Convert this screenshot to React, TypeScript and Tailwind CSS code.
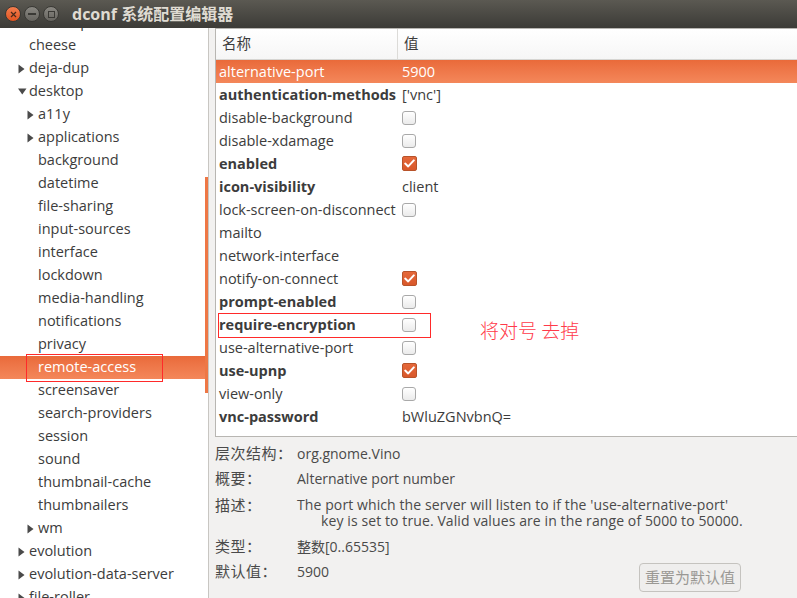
import React from "react";

const FONT = '"Open Sans", "Noto Sans CJK SC", sans-serif';

type TreeItem = { label: string; level: number; arrow?: "right" | "down"; selected?: boolean };

const tree: TreeItem[] = [
  { label: "charmap", level: 1 },
  { label: "cheese", level: 1 },
  { label: "deja-dup", level: 1, arrow: "right" },
  { label: "desktop", level: 1, arrow: "down" },
  { label: "a11y", level: 2, arrow: "right" },
  { label: "applications", level: 2, arrow: "right" },
  { label: "background", level: 2 },
  { label: "datetime", level: 2 },
  { label: "file-sharing", level: 2 },
  { label: "input-sources", level: 2 },
  { label: "interface", level: 2 },
  { label: "lockdown", level: 2 },
  { label: "media-handling", level: 2 },
  { label: "notifications", level: 2 },
  { label: "privacy", level: 2 },
  { label: "remote-access", level: 2, selected: true },
  { label: "screensaver", level: 2 },
  { label: "search-providers", level: 2 },
  { label: "session", level: 2 },
  { label: "sound", level: 2 },
  { label: "thumbnail-cache", level: 2 },
  { label: "thumbnailers", level: 2 },
  { label: "wm", level: 2, arrow: "right" },
  { label: "evolution", level: 1, arrow: "right" },
  { label: "evolution-data-server", level: 1, arrow: "right" },
  { label: "file-roller", level: 1, arrow: "right" },
];

type Row = { name: string; bold?: boolean; value?: string; check?: boolean; selected?: boolean };

const rows: Row[] = [
  { name: "alternative-port", value: "5900", selected: true },
  { name: "authentication-methods", bold: true, value: "['vnc']" },
  { name: "disable-background", check: false },
  { name: "disable-xdamage", check: false },
  { name: "enabled", bold: true, check: true },
  { name: "icon-visibility", bold: true, value: "client" },
  { name: "lock-screen-on-disconnect", check: false },
  { name: "mailto" },
  { name: "network-interface" },
  { name: "notify-on-connect", check: true },
  { name: "prompt-enabled", bold: true, check: false },
  { name: "require-encryption", bold: true, check: false },
  { name: "use-alternative-port", check: false },
  { name: "use-upnp", bold: true, check: true },
  { name: "view-only", check: false },
  { name: "vnc-password", bold: true, value: "bWluZGNvbnQ=" },
];

function Arrow({ dir }: { dir: "right" | "down" }) {
  if (dir === "down") {
    return (
      <svg width="9" height="7" viewBox="0 0 9 7">
        <polygon points="0,0.5 8.5,0.5 4.25,6.5" fill="#4a4a4a" />
      </svg>
    );
  }
  return (
    <svg width="7" height="10" viewBox="0 0 7 10">
      <polygon points="0.5,0.5 6.5,5 0.5,9.5" fill="#4a4a4a" />
    </svg>
  );
}

function Check({ on }: { on: boolean }) {
  if (on) {
    return (
      <div className="w-[15px] h-[15px] rounded-[2px] border border-[#b8532a] bg-gradient-to-b from-[#e4683a] to-[#d9582a] flex items-center justify-center">
        <svg width="11" height="9" viewBox="0 0 11 9">
          <path d="M1.2 4.6 L4.2 7.4 L9.8 1.4" stroke="#ffffff" strokeWidth="2" fill="none" strokeLinecap="round" strokeLinejoin="round" />
        </svg>
      </div>
    );
  }
  return <div className="w-[14px] h-[14px] rounded-[3px] border border-[#a9a9a9] bg-gradient-to-b from-white to-[#ebebeb]" />;
}

function Label({ children }: { children: React.ReactNode }) {
  return <div className="w-[82px] shrink-0 text-[15px] tracking-[0.5px]">{children}</div>;
}

export default function App() {
  return (
    <div className="w-[797px] h-[598px] overflow-hidden flex flex-col bg-[#f2f1f0] relative" style={{ fontFamily: FONT }}>
      {/* Title bar */}
      <div className="h-[28px] shrink-0 flex items-center bg-gradient-to-b from-[#5b5952] to-[#3c3b37]">
        <div className="flex items-center gap-[3px] pl-[5px]">
          <div className="w-[16px] h-[16px] rounded-full bg-gradient-to-b from-[#f37d4d] to-[#e2541f] border border-[#3a3935] flex items-center justify-center">
            <svg width="7" height="7" viewBox="0 0 7 7">
              <path d="M1 1 L6 6 M6 1 L1 6" stroke="#4a2a1a" strokeWidth="1.2" />
            </svg>
          </div>
          <div className="w-[16px] h-[16px] rounded-full bg-gradient-to-b from-[#8a8882] to-[#66645f] border border-[#3a3935] flex items-center justify-center">
            <div className="w-[8px] h-[1.5px] bg-[#3a3935]" />
          </div>
          <div className="w-[16px] h-[16px] rounded-full bg-gradient-to-b from-[#8a8882] to-[#66645f] border border-[#3a3935] flex items-center justify-center">
            <div className="w-[7px] h-[7px] border border-[#3a3935]" />
          </div>
        </div>
        <div className="ml-[13px] text-[16px] font-bold text-[#dfdbd2] leading-none">dconf 系统配置编辑器</div>
      </div>

      <div className="flex flex-1 min-h-0">
        {/* Left tree */}
        <div className="w-[209px] shrink-0 bg-white border-r border-[#c8c6c2] relative overflow-hidden">
          <div className="mt-[-17px] text-[14.5px] text-[#3c3c3c]">
            {tree.map((t, i) => (
              <div
                key={i}
                className={
                  "h-[23px] flex items-center " +
                  (t.selected ? "bg-gradient-to-b from-[#e96a3a] to-[#f4875a] text-white" : "")
                }
                style={{ paddingLeft: t.level === 1 ? 18 : 27 }}
              >
                <div className="w-[11px] flex items-center">{t.arrow ? <Arrow dir={t.arrow} /> : null}</div>
                <span className="leading-none">{t.label}</span>
              </div>
            ))}
          </div>
          {/* scrollbar thumb */}
          <div className="absolute left-[205px] top-[149px] w-[3px] h-[216px] bg-[#ee7745]" />
        </div>

        {/* Right pane */}
        <div className="flex-1 min-w-0 flex flex-col pl-[6px]">
          <div className="h-[409px] shrink-0 bg-white border-l border-t border-b border-[#b8b6b2] w-[600px]">
            <div className="h-[31px] flex border-b border-[#d6d5d2] bg-gradient-to-b from-white to-[#f6f6f6] text-[14.5px] text-[#3c3c3c]">
              <div className="w-[182px] border-r border-[#dcdbd8] flex items-center pl-[6px]">名称</div>
              <div className="flex items-center pl-[6px]">值</div>
            </div>
            {rows.map((r, i) => (
              <div
                key={i}
                className={
                  "h-[23px] flex items-center text-[14.5px] " +
                  (r.selected ? "bg-gradient-to-b from-[#e96a3a] to-[#f4875a] text-white" : "text-[#3c3c3c]")
                }
              >
                <div className={"w-[182px] pl-[3px] whitespace-nowrap " + (r.bold ? "font-bold" : "")}>{r.name}</div>
                <div className="pl-[4px] flex items-center">
                  {r.check !== undefined ? <Check on={r.check} /> : <span>{r.value}</span>}
                </div>
              </div>
            ))}
          </div>

          {/* Info panel */}
          <div className="text-[14px] text-[#4a4a4a] pt-[4px]">
            <div className="h-[25px] flex items-center">
              <Label>层次结构：</Label>
              <div>org.gnome.Vino</div>
            </div>
            <div className="h-[25px] flex items-center">
              <Label>概要：</Label>
              <div>Alternative port number</div>
            </div>
            <div className="flex mt-[6px] leading-[16px]">
              <Label>描述：</Label>
              <div>
                <div className="tracking-[0.1px]">The port which the server will listen to if the 'use-alternative-port'</div>
                <div className="pl-[24px] tracking-[0.1px]">key is set to true. Valid values are in the range of 5000 to 50000.</div>
              </div>
            </div>
            <div className="h-[25px] flex items-center mt-[5px]">
              <Label>类型：</Label>
              <div>整数[0..65535]</div>
            </div>
            <div className="flex items-start">
              <div className="h-[25px] flex items-center">
                <Label>默认值：</Label>
                <div>5900</div>
              </div>
              <div className="flex-1" />
              <button className="mr-[56px] mt-[4px] w-[102px] h-[29px] rounded-[4px] border border-[#c5c3bf] bg-[#efeeed] text-[15px] text-[#9a9894] flex items-center justify-center">
                重置为默认值
              </button>
            </div>
          </div>
        </div>
      </div>

      {/* Annotations */}
      <div className="absolute left-[26px] top-[354px] w-[137px] h-[28px] border border-[#ff2a2a]" />
      <div className="absolute left-[218px] top-[313px] w-[213px] h-[25px] border border-[#ff2a2a]" />
      <div className="absolute left-[480px] top-[320px] text-[19px] text-[#ff3a4a] leading-none whitespace-nowrap" style={{ fontFamily: '"Noto Sans CJK SC", sans-serif', fontWeight: 300 }}>
        将对号 去掉
      </div>
    </div>
  );
}
